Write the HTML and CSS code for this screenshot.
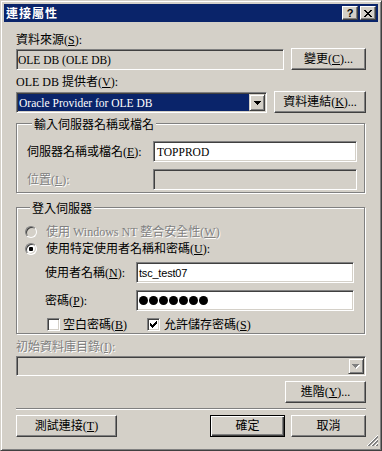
FILE: index.html
```html
<!DOCTYPE html>
<html lang="zh-Hant">
<head>
    <meta charset="UTF-8">
    <title>連接屬性</title>
    <link rel="stylesheet" href="styles.css">
</head>
<body>
<div class="window">
    <div class="titlebar">
        <span class="title">連接屬性</span>
        <div class="caption-btns">
            <span class="cap-btn">?</span>
            <span class="cap-btn">
                <svg width="8" height="7" viewBox="0 0 8 7" shape-rendering="crispEdges"><path d="M0 0h2v1H0zM6 0h2v1H6zM1 1h2v1H1zM5 1h2v1H5zM2 2h4v1H2zM3 3h2v1H3zM2 4h4v1H2zM1 5h2v1H1zM5 5h2v1H5zM0 6h2v1H0zM6 6h2v1H6z" fill="#000"/></svg>
            </span>
        </div>
    </div>

    <div class="client">
        <div class="lbl first">資料來源(<u>S</u>):</div>
        <div class="row r-source">
            <div class="field readonly source">OLE DB (OLE DB)</div>
            <button class="btn w75">變更(<u>C</u>)...</button>
        </div>

        <div class="lbl provider-lbl">OLE DB 提供者(<u>V</u>):</div>
        <div class="row r-provider">
            <div class="combo provider">
                <div class="combo-text selected">Oracle Provider for OLE DB</div>
                <span class="combo-arrow">
                    <svg width="7" height="4" viewBox="0 0 7 4" shape-rendering="crispEdges"><path d="M0 0h7v1H0zM1 1h5v1H1zM2 2h3v1H2zM3 3h1v1H3z" fill="#000"/></svg>
                </span>
            </div>
            <button class="btn w92">資料連結(<u>K</u>)...</button>
        </div>

        <!-- 伺服器 -->
        <div class="group server">
            <div class="group-title">輸入伺服器名稱或檔名</div>
            <div class="grow first">
                <span class="lbl">伺服器名稱或檔名(<u>E</u>):</span>
                <div class="field input server-input">TOPPROD</div>
            </div>
            <div class="grow second">
                <span class="lbl disabled">位置(<u>L</u>):</span>
                <div class="field readonly server-input"></div>
            </div>
        </div>

        <!-- 登入 -->
        <div class="group login">
            <div class="group-title">登入伺服器</div>
            <div class="opt first">
                <span class="radio off"></span>
                <span class="lbl disabled">使用 Windows NT 整合安全性(<u>W</u>)</span>
            </div>
            <div class="opt">
                <span class="radio"><span class="dot"></span></span>
                <span class="lbl">使用特定使用者名稱和密碼(<u>U</u>):</span>
            </div>
            <div class="cred user">
                <span class="lbl cred-lbl">使用者名稱(<u>N</u>):</span>
                <div class="field input cred-input user-text">tsc_test07</div>
            </div>
            <div class="cred pass">
                <span class="lbl cred-lbl">密碼(<u>P</u>):</span>
                <div class="field input cred-input">
                    <div class="dots">
                        <span class="pw"></span><span class="pw"></span><span class="pw"></span><span class="pw"></span><span class="pw"></span><span class="pw"></span><span class="pw"></span>
                    </div>
                </div>
            </div>
            <div class="checks">
                <div class="check-item blank">
                    <span class="checkbox"></span>
                    <span class="lbl">空白密碼(<u>B</u>)</span>
                </div>
                <div class="check-item save">
                    <span class="checkbox">
                        <svg width="7" height="7" viewBox="0 0 7 7" shape-rendering="crispEdges"><path d="M6 0h1v1H6zM5 1h2v1H5zM0 2h1v1H0zM4 2h3v1H4zM0 3h2v1H0zM3 3h3v1H3zM0 4h5v1H0zM1 5h3v1H1zM2 6h1v1H2z" fill="#000"/></svg>
                    </span>
                    <span class="lbl">允許儲存密碼(<u>S</u>)</span>
                </div>
            </div>
        </div>

        <div class="lbl disabled catalog-lbl">初始資料庫目錄(<u>I</u>):</div>
        <div class="combo catalog">
            <div class="combo-text"></div>
            <span class="combo-arrow">
                <svg width="8" height="5" viewBox="0 0 8 5" shape-rendering="crispEdges"><path d="M1 1h7v1H1zM2 2h5v1H2zM3 3h3v1H3zM4 4h1v1H4z" fill="#fff"/><path d="M0 0h7v1H0zM1 1h5v1H1zM2 2h3v1H2zM3 3h1v1H3z" fill="#808080"/></svg>
            </span>
        </div>

        <button class="btn w81 advanced">進階(<u>Y</u>)...</button>
        <div class="separator"></div>

        <div class="row r-bottom">
            <button class="btn w101">測試連接(<u>T</u>)</button>
            <div class="right-btns">
                <button class="btn w75 default">確定</button>
                <button class="btn w75">取消</button>
            </div>
        </div>
    </div>

    <svg class="grip" width="12" height="12" viewBox="0 0 12 12" shape-rendering="crispEdges">
        <line x1="11.5" y1="0.5" x2="0.5" y2="11.5" stroke="#fff"/>
        <line x1="11.5" y1="1.5" x2="1.5" y2="11.5" stroke="#808080"/>
        <line x1="11.5" y1="2.5" x2="2.5" y2="11.5" stroke="#808080"/>
        <line x1="11.5" y1="4.5" x2="4.5" y2="11.5" stroke="#fff"/>
        <line x1="11.5" y1="5.5" x2="5.5" y2="11.5" stroke="#808080"/>
        <line x1="11.5" y1="6.5" x2="6.5" y2="11.5" stroke="#808080"/>
        <line x1="11.5" y1="8.5" x2="8.5" y2="11.5" stroke="#fff"/>
        <line x1="11.5" y1="9.5" x2="9.5" y2="11.5" stroke="#808080"/>
        <line x1="11.5" y1="10.5" x2="10.5" y2="11.5" stroke="#808080"/>
    </svg>
</div>
</body>
</html>
```

FILE: styles.css
```css
* {
    box-sizing: border-box;
}
body {
    margin: 0;
    background: #d4d0c8;
    font-family: "Liberation Serif", "Noto Sans CJK TC", serif;
    font-size: 12px;
    color: #000;
}
u {
    text-underline-offset: 1px;
}

/* window frame */
.window {
    position: relative;
    width: 382px;
    height: 451px;
    padding: 3px;
    border: 1px solid;
    border-color: #d4d0c8 #404040 #404040 #d4d0c8;
    box-shadow: inset 1px 1px #fff, inset -1px -1px #808080;
    background: #d4d0c8;
    display: flex;
    flex-direction: column;
}
.titlebar {
    height: 18px;
    flex: none;
    background: #0a246a;
    display: flex;
    align-items: center;
    justify-content: space-between;
    padding: 0 2px;
}
.title {
    color: #fff;
    font-family: "Noto Sans CJK TC", sans-serif;
    font-weight: bold;
    letter-spacing: 1px;
    line-height: 14px;
}
.caption-btns {
    display: flex;
    gap: 2px;
}
.cap-btn {
    width: 16px;
    height: 14px;
    background: #d4d0c8;
    border: 1px solid;
    border-color: #fff #404040 #404040 #fff;
    box-shadow: inset -1px -1px #808080;
    display: flex;
    align-items: center;
    justify-content: center;
    font-family: "Liberation Sans", sans-serif;
    font-weight: bold;
    font-size: 11px;
    line-height: 1;
}

.client {
    flex: 1;
    display: flex;
    flex-direction: column;
    padding: 0 12px;
}

/* text */
.lbl {
    line-height: 14px;
    height: 14px;
    white-space: nowrap;
}
.lbl.first {
    margin-top: 11px;
}
.disabled {
    color: #808080;
    text-shadow: 1px 1px 0 #fff;
}

.row {
    display: flex;
    align-items: flex-end;
    justify-content: space-between;
}
.r-source {
    margin-top: 1px;
}
.provider-lbl {
    margin-top: 5px;
}
.r-provider {
    margin-top: 2px;
}

/* controls */
.btn {
    height: 22px;
    padding: 0;
    background: #d4d0c8;
    border: 1px solid;
    border-color: #fff #404040 #404040 #fff;
    box-shadow: inset -1px -1px #808080;
    display: flex;
    align-items: center;
    justify-content: center;
    font: inherit;
    color: #000;
    line-height: 14px;
}
.btn.default {
    border-color: #000;
    box-shadow: inset 1px 1px #fff, inset -1px -1px #404040, inset -2px -2px #808080;
}
.w75 { width: 75px; }
.w81 { width: 81px; }
.w92 { width: 92px; }
.w101 { width: 101px; }

.field {
    height: 21px;
    border: 1px solid;
    border-color: #808080 #fff #fff #808080;
    box-shadow: inset 1px 1px #404040, inset -1px -1px #d4d0c8;
    background: #fff;
    padding: 0 3px;
    display: flex;
    align-items: center;
    font-size: 11.5px;
    white-space: nowrap;
}
.field.readonly {
    background: #d4d0c8;
}
.source {
    width: 268px;
    padding-left: 1px;
}

.combo {
    height: 21px;
    border: 1px solid;
    border-color: #808080 #fff #fff #808080;
    box-shadow: inset 1px 1px #404040, inset -1px -1px #d4d0c8;
    background: #fff;
    padding: 1px;
    display: flex;
}
.provider {
    width: 251px;
}
.combo-text {
    flex: 1;
    display: flex;
    align-items: center;
    padding-left: 1px;
    font-size: 11.5px;
    white-space: nowrap;
}
.combo-text.selected {
    background: #0a246a;
    color: #fff;
}
.combo-arrow {
    width: 16px;
    flex: none;
    background: #d4d0c8;
    border: 1px solid;
    border-color: #d4d0c8 #404040 #404040 #d4d0c8;
    box-shadow: inset 1px 1px #fff, inset -1px -1px #808080;
    display: flex;
    align-items: center;
    justify-content: center;
}

/* group boxes */
.group {
    width: 349px;
    border: 1px solid #808080;
    box-shadow: inset 1px 1px #fff, 1px 1px #fff;
    display: flex;
    flex-direction: column;
}
.group-title {
    width: fit-content;
    margin: -6px 0 0 5px;
    padding: 0 2px;
    background: #d4d0c8;
    line-height: 14px;
    white-space: nowrap;
}
.server {
    margin-top: 10px;
    padding: 0 7px 2px 10px;
}
.grow {
    display: flex;
    align-items: center;
    justify-content: space-between;
}
.grow.first {
    margin-top: 9px;
}
.grow.second {
    margin-top: 7px;
}
.server-input {
    width: 204px;
}

.login {
    margin-top: 14px;
    padding: 0 0 2px 8px;
}
.opt {
    height: 17px;
    display: flex;
    align-items: center;
}
.opt.first {
    margin-top: 7px;
}
.radio {
    width: 12px;
    height: 12px;
    margin-right: 9px;
    border-radius: 50%;
    border: 1px solid;
    border-color: #808080 #fff #fff #808080;
    box-shadow: inset 1px 1px #404040, inset -1px -1px #d4d0c8;
    background: #fff;
    display: flex;
    align-items: center;
    justify-content: center;
}
.radio.off {
    background: #d4d0c8;
}
.dot {
    width: 4px;
    height: 4px;
    border-radius: 1px;
    background: #000;
}

.cred {
    display: flex;
    align-items: center;
    padding-left: 20px;
}
.cred.user {
    margin-top: 5px;
}
.cred.pass {
    margin-top: 7px;
}
.cred-lbl {
    width: 91px;
}
.cred-input {
    width: 218px;
    padding-left: 2px;
}
.user-text {
    font-family: "Liberation Sans", sans-serif;
    font-size: 11px;
    letter-spacing: -0.2px;
}
.dots {
    display: flex;
    gap: 1px;
}
.pw {
    width: 9px;
    height: 9px;
    border-radius: 50%;
    background: #000;
}

.checks {
    margin-top: 7px;
    padding-left: 22px;
    display: flex;
    height: 13px;
}
.check-item {
    display: flex;
    align-items: center;
}
.check-item.blank {
    width: 100px;
}
.checkbox {
    width: 13px;
    height: 13px;
    border: 1px solid;
    border-color: #808080 #fff #fff #808080;
    box-shadow: inset 1px 1px #404040, inset -1px -1px #d4d0c8;
    background: #fff;
    display: flex;
    align-items: center;
    justify-content: center;
    margin-right: 3px;
}
.check-item.save .checkbox {
    margin-right: 4px;
}

.catalog-lbl {
    margin-top: 6px;
}
.catalog {
    margin-top: 2px;
    height: 20px;
    background: #d4d0c8;
}

.advanced {
    align-self: flex-end;
    margin-top: 5px;
}
.separator {
    margin-top: 5px;
    height: 2px;
    border-top: 1px solid #808080;
    border-bottom: 1px solid #fff;
}
.r-bottom {
    margin-top: 5px;
}
.right-btns {
    display: flex;
    gap: 6px;
}

.grip {
    position: absolute;
    right: 3px;
    bottom: 3px;
}
```
